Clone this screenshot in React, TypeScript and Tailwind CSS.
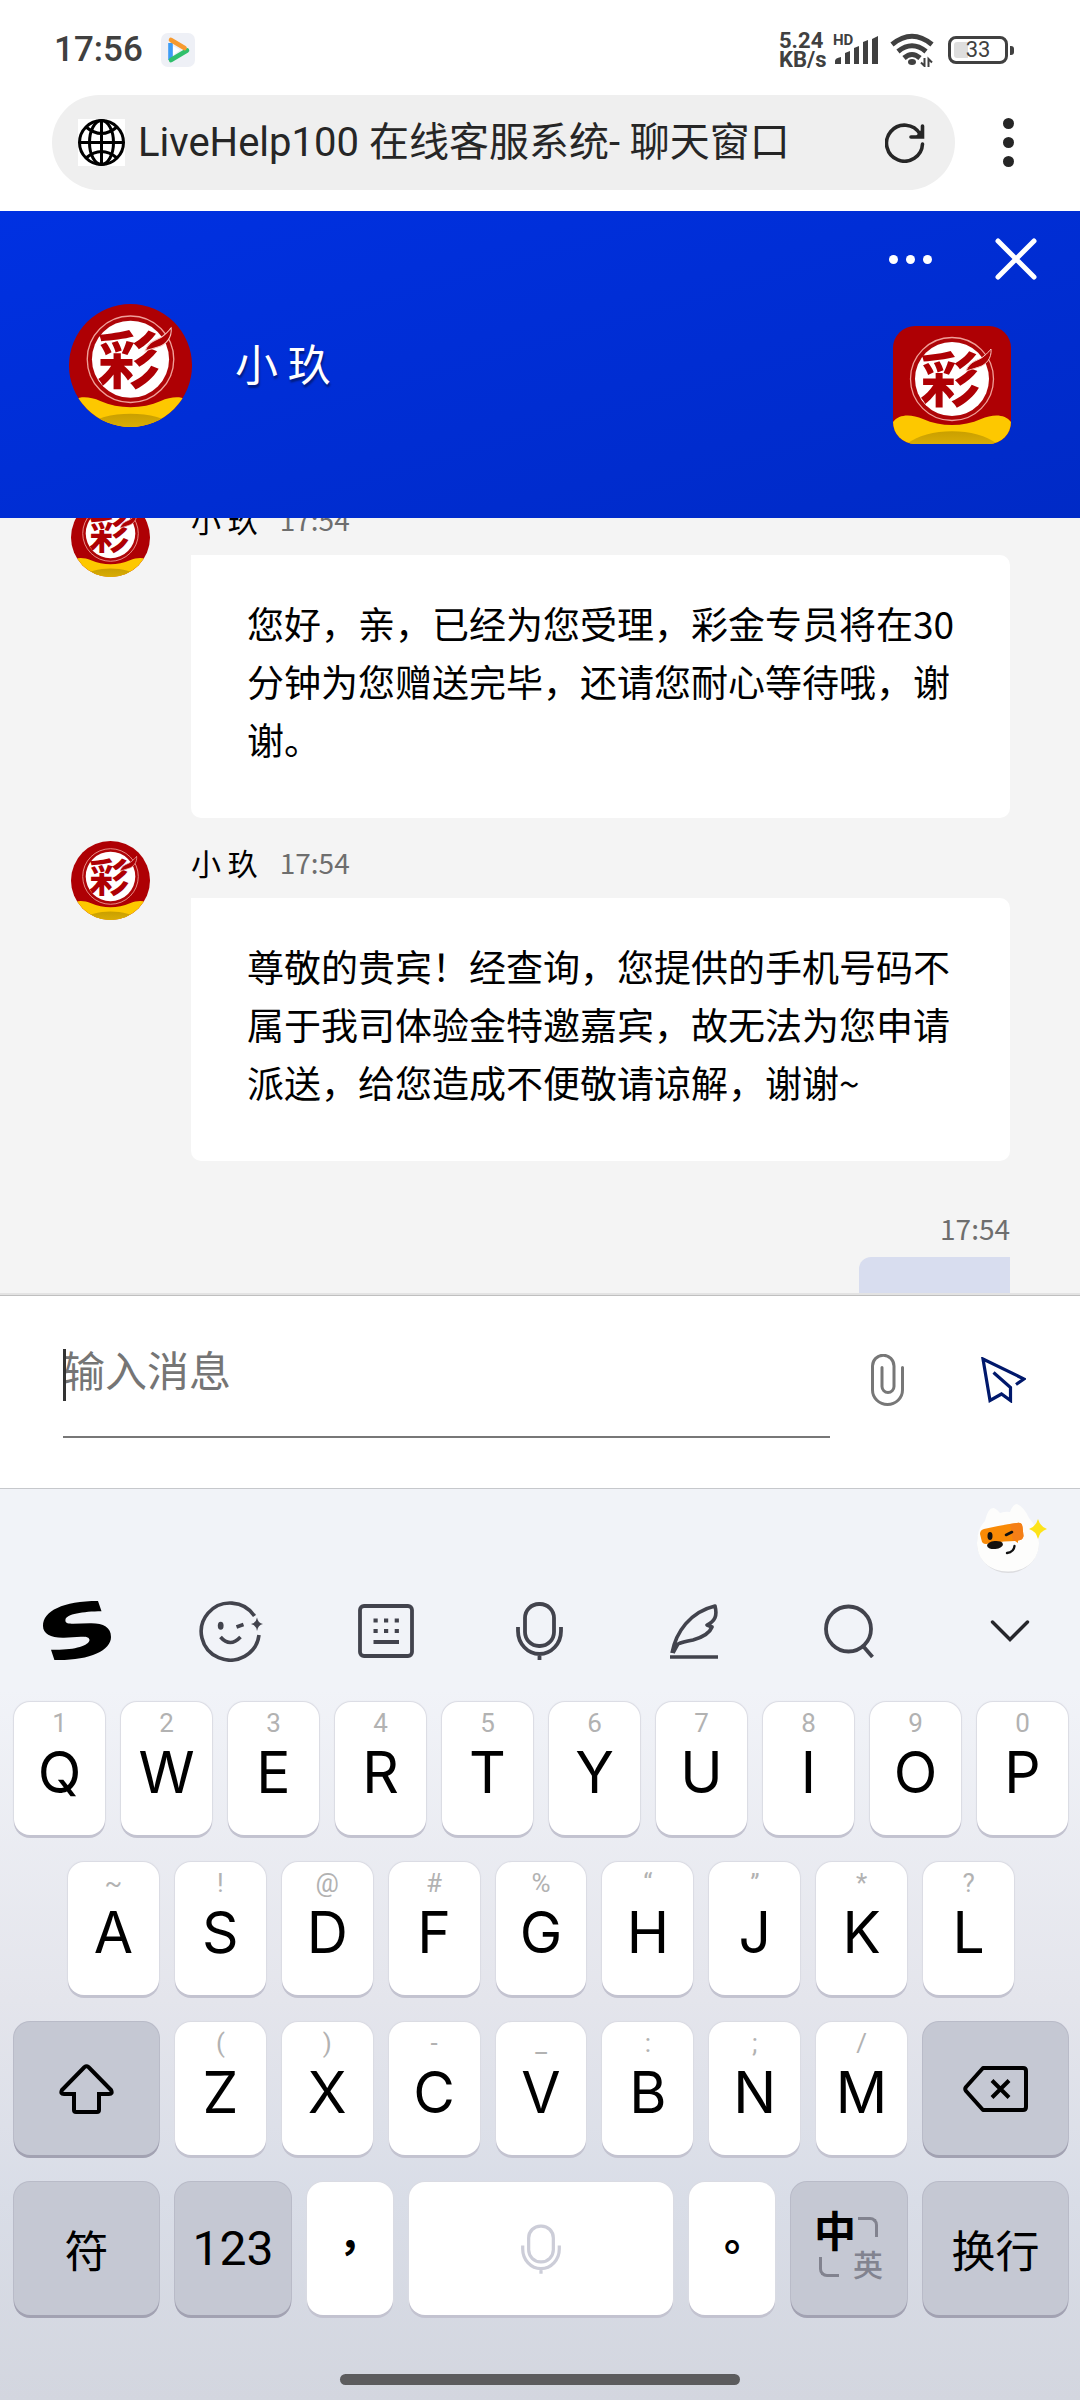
import React, { useId } from "react";

const CJK = "font-['Noto_Sans_CJK_SC',sans-serif]";

function LotteryLogo({ className }: { className: string }) {
  const shade = useId();
  return (
    <svg viewBox="0 0 118 118" className={className} aria-hidden="true">
      <defs>
        <linearGradient id={shade} x1="0" y1="0" x2="0" y2="1">
          <stop offset="0" stopColor="#c99f00" />
          <stop offset="1" stopColor="#d9ad05" />
        </linearGradient>
      </defs>
      <rect width="118" height="118" fill="#ae0004" />
      <circle cx="59" cy="53" r="41.5" fill="#ae0508" stroke="#f0a09a" strokeWidth="1.3" />
      <circle cx="59" cy="53" r="37" fill="#fff" />
      <text
        x="57"
        y="76"
        textAnchor="middle"
        fontSize="60"
        fontWeight="700"
        fill="#ae0004"
        fontFamily="'Noto Sans CJK SC', sans-serif"
      >
        彩
      </text>
      <path
        d="M73 45C77 34 86 35 91 30C95 27 96 25 98 23C99 32 93 39 86 41C80 43 76 44 73 45Z"
        fill="#ae0004"
        stroke="#f7c9c4"
        strokeWidth="1"
      />
      <path d="M0 96C6 88 18 88 30 93C48 101 70 101 88 93C100 88 112 88 118 96V118H0Z" fill="#fdc800" />
      <path d="M14 118C34 101 84 101 104 118Z" fill={`url(#${shade})`} />
    </svg>
  );
}

function MicIcon({ className }: { className: string }) {
  return (
    <svg viewBox="0 0 47 58" className={className} fill="none" stroke="currentColor" strokeWidth="3.8" aria-hidden="true">
      <rect x="9" y="2" width="29" height="42" rx="14" />
      <path d="M2 25V29A21.5 23 0 0 0 45 29V25M23.5 52V58" />
    </svg>
  );
}

function StatusBar() {
  return (
    <div className="flex h-[95px] items-center justify-between pt-[5px] pr-[66px] pl-[54px] text-[#404040]">
      <div className="flex items-center gap-[18px]">
        <span className="font-[Roboto,sans-serif] text-[35px] leading-10 font-medium">17:56</span>
        <svg viewBox="0 0 34 34" className="size-[34px]" fill="none" strokeWidth="4.6" strokeLinejoin="round" aria-hidden="true">
          <rect width="34" height="34" rx="7" fill="#eef0f6" />
          <path d="M9.5 10V27" stroke="#3b9cf5" />
          <path d="M10 27L26 17.500" stroke="#2fbf6b" strokeLinecap="round" />
          <path d="M10 7L23.500 15" stroke="#f79a2e" strokeLinecap="round" />
          <path d="M12 13L19 17L12 22Z" fill="#fff" />
        </svg>
      </div>
      <div className="flex items-center">
        <div className="w-[54px] font-[Roboto,sans-serif] text-[22px] leading-[19px] font-bold">
          <div>5.24</div>
          <div>KB/s</div>
        </div>
        <div className="relative">
          <span className="absolute -top-1 left-0 font-[Roboto,sans-serif] text-[15px] leading-4 font-bold">HD</span>
          <svg viewBox="0 0 46 28" className="h-7 w-[46px]" fill="currentColor" aria-hidden="true">
            <path d="M2 28V25Q2 22 8 21V28ZM12 28V17L17 15V28ZM21 28V12L26 10V28ZM30 28V6L35 4V28ZM39 28V3L45 0V28Z" />
          </svg>
        </div>
        <svg viewBox="0 0 44 34" className="ml-[11px] h-[34px] w-11" fill="none" stroke="currentColor" strokeWidth="5" aria-hidden="true">
          <path d="M2 11.500Q22 -5 42 11.500M8 18.500Q22 7 36 18.500M14 25Q22 18 30 25" />
          <ellipse cx="22" cy="29" rx="4" ry="3" fill="currentColor" stroke="none" />
          <path d="M34.500 25V33L31 29.500M38.500 34V26L42 29.500" strokeWidth="2" />
        </svg>
        <div className="ml-[14px] flex items-center">
          <div className="relative flex h-7 w-[60px] items-center justify-center rounded-[8px] border-[3px] border-[#404040]">
            <span className="absolute inset-y-[3px] left-[3px] w-[14px] rounded-l-[3px] bg-[#dedede]" />
            <span className="relative font-[Roboto,sans-serif] text-[22px] leading-6">33</span>
          </div>
          <span className="ml-[2px] h-[9px] w-1 rounded-r-[3px] bg-[#404040]" />
        </div>
      </div>
    </div>
  );
}

function AddressBar() {
  return (
    <div className="flex items-center pr-[66px] pb-[21px] pl-[52px] text-[#262626]">
      <div className="flex h-[95px] flex-1 items-center rounded-full bg-[#efefef] pr-[30px] pl-[26px]">
        <svg viewBox="0 0 47 47" className="size-[47px] shrink-0 bg-white" fill="none" stroke="#000" strokeWidth="3" aria-hidden="true">
          <circle cx="23.500" cy="23.500" r="22" />
          <path d="M23.500 1V46M1 23.500H46M8 8Q23.500 21 39 8M8 39Q23.500 26 39 39" />
          <ellipse cx="23.500" cy="23.500" rx="12" ry="22" />
        </svg>
        <span className="ml-[13px] flex-1 font-[Roboto,'Noto_Sans_CJK_SC',sans-serif] text-[40px] leading-[56px] whitespace-nowrap">
          LiveHelp100 在线客服系统- 聊天窗口
        </span>
        <button type="button" aria-label="刷新">
          <svg viewBox="0 0 40 40" className="size-10" fill="none" stroke="currentColor" strokeWidth="3.600" aria-hidden="true">
            <path d="M37.500 21A18 18 0 1 1 35 11" strokeLinecap="round" />
            <path d="M37.500 3V14H26" strokeLinecap="round" />
            <path d="M31 13L37 6V14Z" fill="currentColor" stroke="none" />
          </svg>
        </button>
      </div>
      <button type="button" aria-label="更多" className="ml-[48px] flex w-[11px] flex-col gap-2">
        <span className="size-[11px] rounded-full bg-current" />
        <span className="size-[11px] rounded-full bg-current" />
        <span className="size-[11px] rounded-full bg-current" />
      </button>
    </div>
  );
}

function ChatHeader() {
  return (
    <header className="flex shrink-0 justify-between bg-linear-to-br from-[#0031e2] to-[#002ac6] pr-[43px] pb-[74px] pl-[69px] text-white">
      <div className="mt-[93px] flex h-[123px] items-center gap-[43px]">
        <LotteryLogo className="size-[123px] rounded-full" />
        <h1 className={`${CJK} pb-2 text-[43px] leading-[60px] text-shadow-[1px_3px_2px_rgba(0,0,0,0.4)]`}>小 玖</h1>
      </div>
      <div className="flex flex-col items-end pt-[27px]">
        <div className="flex items-center gap-[63px]">
          <button type="button" aria-label="菜单" className="flex gap-2">
            <span className="size-[9px] rounded-full bg-white" />
            <span className="size-[9px] rounded-full bg-white" />
            <span className="size-[9px] rounded-full bg-white" />
          </button>
          <button type="button" aria-label="关闭">
            <svg viewBox="0 0 42 42" className="size-[42px]" stroke="#fff" strokeWidth="5" strokeLinecap="round" aria-hidden="true">
              <path d="M3 3L39 39M39 3L3 39" />
            </svg>
          </button>
        </div>
        <LotteryLogo className="mt-[46px] mr-[26px] size-[118px] rounded-[22px]" />
      </div>
    </header>
  );
}

function AgentMessage({ text }: { text: string }) {
  return (
    <article className="flex items-start gap-[41px] pb-[23px]">
      <LotteryLogo className="size-[79px] shrink-0 rounded-full" />
      <div className="flex-1">
        <div className="mb-[15px] flex items-center gap-[22px]">
          <span className="text-[30px] leading-[42px] text-black">小 玖</span>
          <time className="text-[28px] leading-[42px] text-[#6e6e6e]">17:54</time>
        </div>
        <p className="rounded-[10px] rounded-tl-none bg-white pt-[39px] pr-[48px] pb-[50px] pl-[56px] text-[37px] leading-[58px] text-black">
          {text}
        </p>
      </div>
    </article>
  );
}

function Composer() {
  return (
    <form className="flex shrink-0 items-start border-t border-[#bfbfbf] bg-white pt-10 pr-[54px] pb-[50px] pl-[63px]" onSubmit={(e) => e.preventDefault()}>
      <div className="relative flex-1">
        <input
          type="text"
          aria-label="输入消息"
          placeholder="输入消息"
          className={`${CJK} block h-[102px] w-full border-b-2 border-[#777777] pb-[36px] text-[42px] outline-none placeholder:text-[#757575] placeholder:opacity-100`}
        />
        <span className="absolute top-[13px] left-0 h-[52px] w-[3px] bg-[#333333]" />
      </div>
      <button type="button" aria-label="附件" className="mt-[18px] ml-[41px]">
        <svg viewBox="0 0 33 52" className="h-[52px] w-[33px]" fill="none" stroke="#777" strokeWidth="3" strokeLinecap="round" aria-hidden="true">
          <path d="M31.500 13.500V36A15 14.500 0 0 1 1.500 36V12A10.700 10.700 0 0 1 23 12V32.500A6 6 0 0 1 11 32.500V13.500" />
        </svg>
      </button>
      <button type="submit" aria-label="发送" className="mt-[21px] ml-[77px]">
        <svg viewBox="0 0 45 46" className="h-[46px] w-[45px]" fill="none" stroke="#00186b" strokeWidth="3.200" aria-hidden="true">
          <path d="M35 27.500L43 22L2 2L9 43.500L20.500 37L29.500 43.500V30.500L12.500 15.500" />
        </svg>
      </button>
    </form>
  );
}

function Mascot() {
  return (
    <svg viewBox="0 0 72 70" className="h-[70px] w-[72px]" aria-hidden="true">
      <ellipse cx="32" cy="40" rx="31" ry="30" fill="#dcdcdf" />
      <path d="M9 18Q12 4 18 5Q22 7 24 10Q30 8 34 9Q37 1 41 1Q48 4 53 15Q63 26 63 40C63 58 49 68.500 32 68.500C14 68.500 1 57 1 40Q1 26 9 18Z" fill="#fdfdfc" />
      <path d="M8 26Q25 22 41 20Q46 19 46.500 24L47.500 33Q47 37 42 37.500L42 40L39 38L28 38.500L10 41Q6 41 5.500 37L4 31Q4 27 8 26Z" fill="#f98a06" />
      <path d="M34 21L41 20Q46 19 46.500 24L47.500 33Q47 37 42 37.500L37 38Z" fill="#f57f17" />
      <ellipse cx="14" cy="33" rx="2.500" ry="4" fill="#111" />
      <path d="M30 32L36 29" stroke="#111" strokeWidth="2.600" strokeLinecap="round" />
      <ellipse cx="19" cy="42" rx="8" ry="4" fill="#15110e" transform="rotate(-6 19 42)" />
      <path d="M31 50Q38 49 38.500 43" stroke="#111" strokeWidth="2.400" fill="none" strokeLinecap="round" />
      <path d="M62 16Q64 23.500 71 26Q64 28 62 36Q60 28 53 26Q60 23.500 62 16Z" fill="#fde31a" />
    </svg>
  );
}

function Toolbar() {
  const button = "flex items-center justify-center";
  return (
    <div className="grid h-[116px] grid-cols-7 text-[#42434d]">
      <button type="button" aria-label="输入法" className={button}>
        <svg viewBox="0 0 68 60" className="h-[60px] w-[68px]" fill="#000" aria-hidden="true">
          <path d="M55 0L58.500 10.300C40 10.500 23 13 22.400 19C22 22.500 26 22.700 30 22.700L47 22.300C60 22 68 26 68 36C68 50 45 60 11.400 59L8 48.700C30 49.500 46 45 46.500 39C46.500 35.700 42 35.500 38 35.700L21 36.700C8 37 0 33 0 25C0 10 20 0 55 0Z" />
        </svg>
      </button>
      <button type="button" aria-label="表情" className={button}>
        <svg viewBox="-1 0 64 61" className="h-[61px] w-[64px]" fill="none" stroke="currentColor" strokeWidth="3.600" aria-hidden="true">
          <path d="M54.500 15A29 28.500 0 1 0 59 34" />
          <ellipse cx="20.700" cy="24.700" rx="2.900" ry="4" fill="currentColor" stroke="none" />
          <path d="M36.500 26L43.500 23.500M20.500 36Q30 47 40.500 36" />
          <path d="M57 16.500Q58 22 63 23Q58 24 57 30Q56 24 51 23Q56 22 57 16.500Z" fill="currentColor" stroke="none" />
        </svg>
      </button>
      <button type="button" aria-label="键盘" className={button}>
        <svg viewBox="0 0 56 54" className="h-[54px] w-14" fill="none" stroke="currentColor" strokeWidth="3.800" aria-hidden="true">
          <rect x="2" y="2" width="52" height="50" rx="4" />
          <path d="M15.500 16.500h4.200M26 16.500h4.200M36.700 16.500h4.200M15.500 27h4.200M26 27h4.200M36.700 27h4.200M15.500 38H41" />
        </svg>
      </button>
      <button type="button" aria-label="语音" className={button}>
        <MicIcon className="h-[58px] w-[47px]" />
      </button>
      <button type="button" aria-label="手写" className={button}>
        <svg viewBox="0 0 48 55" className="h-[55px] w-12" fill="none" stroke="currentColor" strokeWidth="3.600" strokeLinejoin="round" aria-hidden="true">
          <path d="M2 49C6 28 20 8 45 2C47.500 12 45 17 37 21L42 23C39 31 30 34 23 36Q12 38 8 40L3 49" />
          <path d="M0 53H48" />
        </svg>
      </button>
      <button type="button" aria-label="搜索" className={button}>
        <svg viewBox="0 0 50 54" className="h-[54px] w-[50px]" fill="none" stroke="currentColor" strokeWidth="3.800" aria-hidden="true">
          <circle cx="24.500" cy="25" r="22.500" />
          <path d="M39 42L48.500 53" />
        </svg>
      </button>
      <button type="button" aria-label="收起" className={`${button} pl-[14px]`}>
        <svg viewBox="0 0 40 22" className="h-[22px] w-10" fill="none" stroke="#26262b" strokeWidth="3.400" strokeLinecap="round" aria-hidden="true">
          <path d="M2.500 2L20 19.500L37.500 2" />
        </svg>
      </button>
    </div>
  );
}

const lightKey = "bg-white shadow-[0_3px_0_#c3c3d0,0_0_1px_1px_#dadbe3]";
const darkKey = "bg-[#c5c8d3] shadow-[0_3px_0_#a2a2b2,0_0_0_1px_#b9bbc8] text-black";
const keyBase = "flex h-[133px] min-w-0 items-center justify-center rounded-[16px]";

function LetterKey({ letter, hint }: { letter: string; hint: string }) {
  return (
    <button
      type="button"
      className={`flex h-[133px] min-w-0 flex-1 flex-col items-center rounded-[16px] pt-1 font-[Inter,sans-serif] ${lightKey}`}
    >
      <span className="font-[Roboto,sans-serif] text-[26px] leading-[34px] text-[#b2b2b2]">{hint}</span>
      <span className="text-[57px] leading-[66px] text-black">{letter}</span>
    </button>
  );
}

const row1 = [["Q", "1"], ["W", "2"], ["E", "3"], ["R", "4"], ["T", "5"], ["Y", "6"], ["U", "7"], ["I", "8"], ["O", "9"], ["P", "0"]];
const row2 = [["A", "~"], ["S", "!"], ["D", "@"], ["F", "#"], ["G", "%"], ["H", "“"], ["J", "”"], ["K", "*"], ["L", "?"]];
const row3 = [["Z", "("], ["X", ")"], ["C", "-"], ["V", "_"], ["B", ":"], ["N", ";"], ["M", "/"]];

function Keyboard() {
  return (
    <section
      aria-label="键盘"
      className="shrink-0 border-t border-[#c6c8cc] bg-[linear-gradient(#f1f3f8_0%,#f1f3f8_22%,#e4e5ec_56%,#d9dde7_78%,#d3d6df_100%)] pb-[15px]"
    >
      <div className="flex justify-end pt-[14px] pr-8">
        <Mascot />
      </div>
      <Toolbar />
      <div className="flex flex-col gap-[27px] pt-[13px] pr-3 pl-[14px]">
        <div className="flex gap-4">
          {row1.map(([l, h]) => (
            <LetterKey key={l} letter={l} hint={h} />
          ))}
        </div>
        <div className="flex gap-4 px-[54px]">
          {row2.map(([l, h]) => (
            <LetterKey key={l} letter={l} hint={h} />
          ))}
        </div>
        <div className="flex gap-4">
          <button type="button" aria-label="大写" className={`${keyBase} w-[145px] ${darkKey}`}>
            <svg viewBox="0 0 55 50" className="h-[50px] w-[55px]" fill="none" stroke="currentColor" strokeWidth="4" aria-hidden="true">
              <path d="M25.500 3Q27.500 1.500 29.500 3L52 26Q54 30 50 30H40V46Q40 48 38 48H17Q15 48 15 46V30H5Q1 30 3 26Z" />
            </svg>
          </button>
          {row3.map(([l, h]) => (
            <LetterKey key={l} letter={l} hint={h} />
          ))}
          <button type="button" aria-label="删除" className={`${keyBase} w-[145px] ${darkKey}`}>
            <svg viewBox="0 0 65 46" className="h-[46px] w-[65px]" fill="none" stroke="currentColor" strokeWidth="4" aria-hidden="true">
              <path d="M20 2H60Q63 2 63 5V41Q63 44 60 44H20L3 25Q1.500 23 3 21Z" strokeLinejoin="round" />
              <path d="M29 14.500L46 31.500M46 14.500L29 31.500" />
            </svg>
          </button>
        </div>
        <div className={`flex gap-4 ${CJK}`}>
          <button type="button" className={`${keyBase} w-[145px] text-[44px] ${darkKey}`}>符</button>
          <button type="button" className={`${keyBase} w-[116px] font-[Roboto,sans-serif] text-[48px] ${darkKey}`}>123</button>
          <button type="button" lang="zh-TW" className={`${keyBase} w-[86px] pb-2 font-['Noto_Sans_CJK_TC',sans-serif] text-[42px] font-bold ${lightKey}`}>
            ，
          </button>
          <button type="button" aria-label="空格" className={`${keyBase} flex-1 text-[#cccdd8] ${lightKey}`}>
            <MicIcon className="h-[50px] w-[40px]" />
          </button>
          <button type="button" lang="zh-TW" className={`${keyBase} w-[86px] pb-2 font-['Noto_Sans_CJK_TC',sans-serif] text-[42px] font-bold ${lightKey}`}>
            。
          </button>
          <button type="button" className={`${keyBase} w-[116px] ${darkKey}`}>
            <span className="grid grid-cols-[38px_28px] items-center justify-items-center">
              <span className="text-[42px] leading-9 font-bold">中</span>
              <span className="mb-1 size-5 rounded-tr-[8px] border-t-[3px] border-r-[3px] border-[#82838f]" />
              <span className="mr-3 size-5 rounded-bl-[8px] border-b-[3px] border-l-[3px] border-[#82838f]" />
              <span className="pb-2 text-[30px] leading-8 font-medium text-[#82838f]">英</span>
            </span>
          </button>
          <button type="button" className={`${keyBase} w-[145px] text-[44px] ${darkKey}`}>换行</button>
        </div>
      </div>
      <div className="mx-auto mt-[59px] h-[11px] w-[37%] rounded-full bg-[#5c5c5e]" />
    </section>
  );
}

export default function App() {
  return (
    <div className="flex h-screen flex-col overflow-hidden bg-white">
      <StatusBar />
      <AddressBar />
      <ChatHeader />
      <main className={`${CJK} min-h-0 flex-1 overflow-hidden border-b-2 border-[#e3e3e3] bg-[#f4f4f4]`}>
        <div className="-mt-5 pr-[70px] pl-[71px]">
          <AgentMessage text="您好，亲，已经为您受理，彩金专员将在30分钟为您赠送完毕，还请您耐心等待哦，谢谢。" />
          <AgentMessage text="尊敬的贵宾！经查询，您提供的手机号码不属于我司体验金特邀嘉宾，故无法为您申请派送，给您造成不便敬请谅解，谢谢~" />
          <article className="flex flex-col items-end pt-[23px]">
            <time className="text-[28px] leading-[42px] text-[#6e6e6e]">17:54</time>
            <div className="mt-2 h-20 w-[151px] rounded-[12px] rounded-tr-none bg-[#d8ddef]" />
          </article>
        </div>
      </main>
      <Composer />
      <Keyboard />
    </div>
  );
}
